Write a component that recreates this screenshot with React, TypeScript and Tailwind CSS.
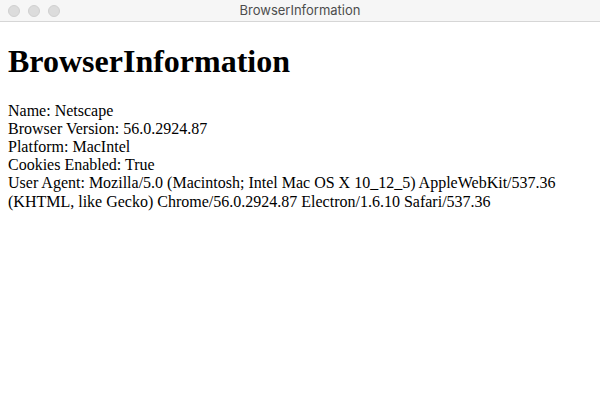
const lines = [
  "Name: Netscape",
  "Browser Version: 56.0.2924.87",
  "Platform: MacIntel",
  "Cookies Enabled: True",
  "User Agent: Mozilla/5.0 (Macintosh; Intel Mac OS X 10_12_5) AppleWebKit/537.36",
  "(KHTML, like Gecko) Chrome/56.0.2924.87 Electron/1.6.10 Safari/537.36",
];

const TitleBar = () => (
  <div className="relative flex h-[22px] items-center border-b border-[#d6d6d6] bg-[#f6f6f6]">
    <div className="flex gap-2 pl-2">
      <span className="h-3 w-3 rounded-full border border-[#d0d0d0] bg-[#dcdcdc]"></span>
      <span className="h-3 w-3 rounded-full border border-[#d0d0d0] bg-[#dcdcdc]"></span>
      <span className="h-3 w-3 rounded-full border border-[#d0d0d0] bg-[#dcdcdc]"></span>
    </div>
    <div className="absolute inset-0 flex items-center justify-center font-['Inter',sans-serif] text-[13px] text-[#4d4d4d]">
      BrowserInformation
    </div>
  </div>
);

const App = () => {
  return (
    <div className="flex h-screen flex-col bg-white">
      <TitleBar />
      <div className="px-2 font-['Liberation_Serif',serif] text-black">
        <h1 className="my-[21.44px] text-[32px] font-bold leading-[36.8px]">BrowserInformation</h1>
        <div className="text-base leading-[18.2px]">
          {lines.map((l) => (
            <div key={l}>{l}</div>
          ))}
        </div>
      </div>
    </div>
  );
};

export default App;
